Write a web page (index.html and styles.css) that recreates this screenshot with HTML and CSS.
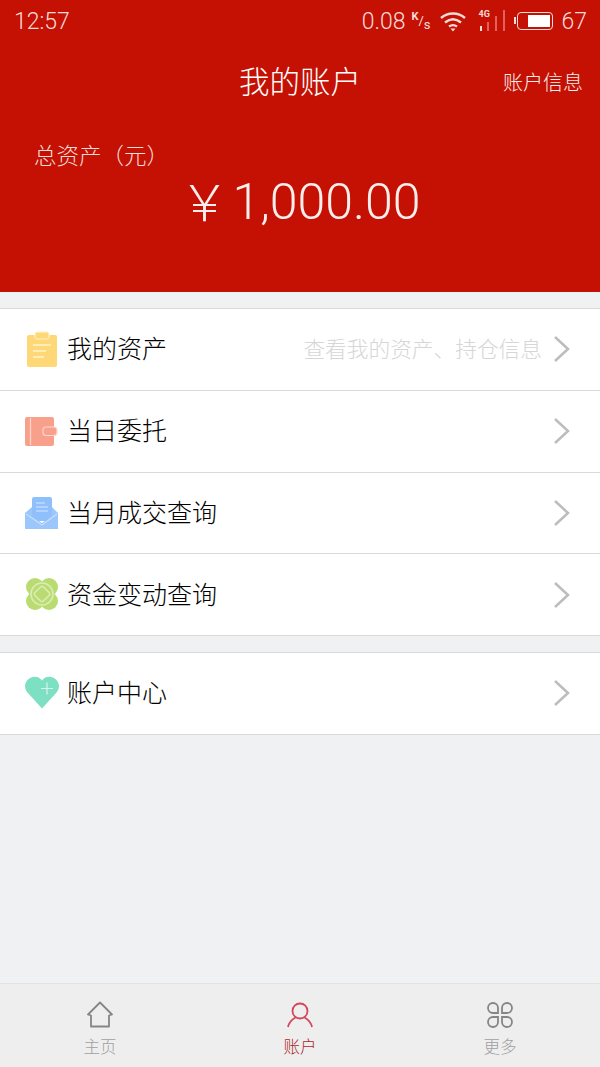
FILE: index.html
```html
<!DOCTYPE html>
<html lang="zh-CN">

<head>
    <meta charset="UTF-8">
    <meta name="viewport" content="width=device-width, initial-scale=1.0">
    <title>我的账户</title>
    <link rel="stylesheet" href="styles.css">
</head>

<body>
    <div class="page">

        <header class="header">
            <div class="status-bar">
                <span class="clock">12:57</span>
                <div class="status-right">
                    <span class="speed">0.08</span>
                    <span class="speed-unit"><span class="unit-k">K</span>/<span class="unit-s">s</span></span>
                    <svg class="wifi" width="28" height="22" viewBox="0 0 28 22" fill="none" stroke="#f6dcd9" stroke-width="2.4">
                        <path d="M2 8C9 2 19 2 26 8" />
                        <path d="M6 12.500C11 8.500 17 8.500 22 12.500" />
                        <path d="M10 16.500C12.500 14.800 15.500 14.800 18 16.500" />
                        <path d="M11.500 18.500H16.500L14 21.500Z" fill="#f6dcd9" stroke="none" />
                    </svg>
                    <div class="signal">
                        <span class="signal-label">4G</span>
                        <svg width="28" height="22" viewBox="0 0 28 22">
                            <rect x="2" y="16" width="2" height="5" fill="#f6dcd9" />
                            <rect x="9" y="12" width="2" height="9" fill="#e0625a" />
                            <rect x="17" y="6" width="2" height="15" fill="#e0625a" />
                            <rect x="25" y="0" width="2" height="21" fill="#e0625a" />
                        </svg>
                    </div>
                    <div class="battery">
                        <div class="battery-fill"></div>
                    </div>
                    <span class="battery-num">67</span>
                </div>
            </div>

            <div class="title-row">
                <h1 class="title">我的账户</h1>
                <a class="title-link">账户信息</a>
            </div>

            <div class="total-label">总资产（元）</div>
            <div class="total-value"><span class="total-yen">￥</span><span class="total-num">1,000.00</span></div>
        </header>

        <section class="group first-group">
            <div class="row">
                <svg class="row-icon" width="36" height="36" viewBox="0 0 36 36">
                    <rect x="3" y="4" width="30" height="32" rx="2" fill="#fed877" />
                    <rect x="11" y="1" width="14" height="7" rx="2" fill="#fed877" stroke="#fff3cf" stroke-width="1" />
                    <path d="M9 14H27M9 20H22M9 26H20" stroke="#fff3cf" stroke-width="1.500" />
                </svg>
                <span class="row-text">我的资产</span>
                <span class="row-hint">查看我的资产、持仓信息</span>
                <svg class="chevron" width="18" height="28" viewBox="0 0 18 28" fill="none" stroke="#bdbdbd" stroke-width="2.500">
                    <path d="M2 2L15 14L2 26" />
                </svg>
            </div>
            <div class="row">
                <svg class="row-icon" width="36" height="36" viewBox="0 0 36 36">
                    <rect x="1" y="4" width="29" height="29" rx="2" fill="#f9a08d" />
                    <path d="M6.500 5V32" stroke="#fdd6cd" stroke-width="1.200" />
                    <rect x="19" y="14" width="14" height="8.500" rx="3" fill="#f9a08d" stroke="#fdd6cd" stroke-width="1.200" />
                </svg>
                <span class="row-text">当日委托</span>
                <svg class="chevron" width="18" height="28" viewBox="0 0 18 28" fill="none" stroke="#bdbdbd" stroke-width="2.500">
                    <path d="M2 2L15 14L2 26" />
                </svg>
            </div>
            <div class="row">
                <svg class="row-icon" width="36" height="36" viewBox="0 0 36 36">
                    <rect x="8" y="2" width="20" height="24" rx="2" fill="#8fc0fb" />
                    <path d="M1 18L8 12V21L18 28L28 21V12L34 18V34H1Z" fill="#9cc7fc" />
                    <path d="M2 19L18 30L33 19" fill="none" stroke="#d6e8fe" stroke-width="1" />
                    <path d="M12 8H21M12 12H24M12 16H24" stroke="#d6e8fe" stroke-width="1.200" />
                </svg>
                <span class="row-text">当月成交查询</span>
                <svg class="chevron" width="18" height="28" viewBox="0 0 18 28" fill="none" stroke="#bdbdbd" stroke-width="2.500">
                    <path d="M2 2L15 14L2 26" />
                </svg>
            </div>
            <div class="row">
                <svg class="row-icon" width="36" height="36" viewBox="0 0 36 36">
                    <circle cx="11" cy="10" r="9" fill="#b9dc72" />
                    <circle cx="25" cy="10" r="9" fill="#b9dc72" />
                    <circle cx="11" cy="24" r="9" fill="#b9dc72" />
                    <circle cx="25" cy="24" r="9" fill="#b9dc72" />
                    <rect x="9" y="8" width="18" height="18" fill="#b9dc72" />
                    <circle cx="18" cy="17" r="11" fill="none" stroke="#dcedb4" stroke-width="1.500" />
                    <rect x="12" y="11" width="12" height="12" rx="2" transform="rotate(45 18 17)" fill="none" stroke="#dcedb4" stroke-width="1.500" />
                </svg>
                <span class="row-text">资金变动查询</span>
                <svg class="chevron" width="18" height="28" viewBox="0 0 18 28" fill="none" stroke="#bdbdbd" stroke-width="2.500">
                    <path d="M2 2L15 14L2 26" />
                </svg>
            </div>
        </section>

        <section class="group">
            <div class="row">
                <svg class="row-icon" width="36" height="36" viewBox="0 0 36 36">
                    <path d="M18 33.500L3 17C-3 8 6 0 13 2C15.500 2.600 17 4 18 5.500C19 4 20.500 2.600 23 2C30 0 39 8 33 17Z" fill="#7de0c2" />
                    <path d="M17 13.500H29M23 7.500V19.500" stroke="#d5f5ea" stroke-width="1.200" />
                </svg>
                <span class="row-text">账户中心</span>
                <svg class="chevron" width="18" height="28" viewBox="0 0 18 28" fill="none" stroke="#bdbdbd" stroke-width="2.500">
                    <path d="M2 2L15 14L2 26" />
                </svg>
            </div>
        </section>

        <nav class="tabbar">
            <div class="tab">
                <svg width="28" height="28" viewBox="0 0 28 28" fill="none" stroke="#858585" stroke-width="1.800" stroke-linejoin="round">
                    <path d="M14 1.500L2 13.500L5 14.500V25.500H23V14.500L26 13.500Z" />
                </svg>
                <span class="tab-text">主页</span>
            </div>
            <div class="tab tab-active">
                <svg width="28" height="28" viewBox="0 0 28 28" fill="none" stroke="#d1485c" stroke-width="1.800">
                    <circle cx="14" cy="10" r="7.500" />
                    <path d="M2 26C3 21 6 18.500 9.500 16.500M26 26C25 21 22 18.500 18.500 16.500" />
                </svg>
                <span class="tab-text">账户</span>
            </div>
            <div class="tab">
                <svg width="28" height="28" viewBox="0 0 28 28" fill="none" stroke="#858585" stroke-width="1.800">
                    <path d="M12 12H7A5 5 0 1 1 12 7Z" />
                    <path d="M16 12H21A5 5 0 1 0 16 7Z" />
                    <path d="M12 16H7A5 5 0 1 0 12 21Z" />
                    <path d="M16 16H21A5 5 0 1 1 16 21Z" />
                </svg>
                <span class="tab-text">更多</span>
            </div>
        </nav>

    </div>
</body>

</html>
```

FILE: styles.css
```css
* {
    box-sizing: border-box;
}

body {
    margin: 0;
    font-family: "Noto Sans CJK SC", "Roboto", sans-serif;
    font-weight: 300;
    background-color: #f0f1f3;
}

.page {
    width: 600px;
    height: 1067px;
    display: flex;
    flex-direction: column;
    overflow: hidden;
}

.header {
    height: 292px;
    background-color: #c41103;
    color: #fff;
    flex-shrink: 0;
}

.status-bar {
    height: 42px;
    padding: 0 13px 0 14px;
    display: flex;
    align-items: center;
    justify-content: space-between;
    color: #f6dcd9;
    font-family: "Roboto", sans-serif;
    font-size: 23px;
    font-weight: 300;
}

.status-right {
    display: flex;
    align-items: center;
}

.speed {
    margin-right: 1px;
}

.speed-unit {
    font-size: 13px;
    font-weight: 400;
    margin-left: 5px;
    width: 17px;
    white-space: nowrap;
}

.unit-k {
    vertical-align: 5px;
    font-size: 11px;
    font-weight: 700;
}

.unit-s {
    vertical-align: -4px;
}

.wifi {
    margin-left: 11px;
}

.signal {
    position: relative;
    margin-left: 11px;
    width: 28px;
    height: 22px;
}

.signal-label {
    position: absolute;
    left: 0;
    top: -1px;
    font-size: 9px;
    font-weight: 700;
    line-height: 10px;
}

.battery {
    position: relative;
    width: 36px;
    height: 18px;
    margin-left: 11px;
    padding: 2px;
    border: 1.500px solid #f6dcd9;
    border-radius: 4px;
    display: flex;
    justify-content: flex-end;
}

.battery::before {
    content: "";
    position: absolute;
    left: -4px;
    top: 4px;
    width: 2px;
    height: 7px;
    background-color: #f6dcd9;
}

.battery-fill {
    width: 22px;
    background-color: #fff;
}

.battery-num {
    margin-left: 8px;
}

.title-row {
    position: relative;
    height: 80px;
    display: flex;
    align-items: center;
    justify-content: center;
    padding-bottom: 4px;
}

.title {
    margin: 0;
    font-size: 30.500px;
    font-weight: 300;
}

.title-link {
    position: absolute;
    right: 17px;
    top: 25px;
    font-size: 20px;
    color: #fbeeec;
}

.total-label {
    margin: 17px 0 0 34px;
    font-size: 22.500px;
    line-height: 30px;
    color: #f6dcd9;
}

.total-value {
    display: flex;
    align-items: center;
    justify-content: center;
    height: 62px;
    margin-top: 2px;
    color: #fbeeec;
}

.total-yen {
    font-size: 50px;
    margin-right: 3px;
    padding-bottom: 6px;
}

.total-num {
    font-family: "Roboto", sans-serif;
    font-size: 50px;
    font-weight: 300;
}

.group {
    margin-top: 16px;
    background-color: #fff;
    border-top: 1px solid #d9d9d9;
    flex-shrink: 0;
}

.row {
    height: 81.750px;
    padding: 0 29px 0 24px;
    display: flex;
    align-items: center;
    border-bottom: 1px solid #d9d9d9;
}

.row-icon {
    flex-shrink: 0;
}

.row-text {
    margin-left: 7px;
    padding-bottom: 4px;
    font-size: 25px;
    color: #000;
}

.row-hint {
    margin-left: auto;
    padding-bottom: 4px;
    font-size: 21.700px;
    color: #d6d6d6;
}

.chevron {
    margin-left: auto;
    flex-shrink: 0;
}

.row-hint + .chevron {
    margin-left: 11px;
}

.tabbar {
    margin-top: auto;
    height: 84px;
    background-color: #eeeeee;
    border-top: 1px solid #e2e2e2;
    display: flex;
    flex-shrink: 0;
}

.tab {
    flex: 1;
    display: flex;
    flex-direction: column;
    align-items: center;
    padding-top: 17px;
}

.tab-text {
    margin-top: 5px;
    font-size: 16.500px;
    line-height: 24px;
    color: #a0a0a0;
}

.tab-active .tab-text {
    color: #ad1f25;
}
```
